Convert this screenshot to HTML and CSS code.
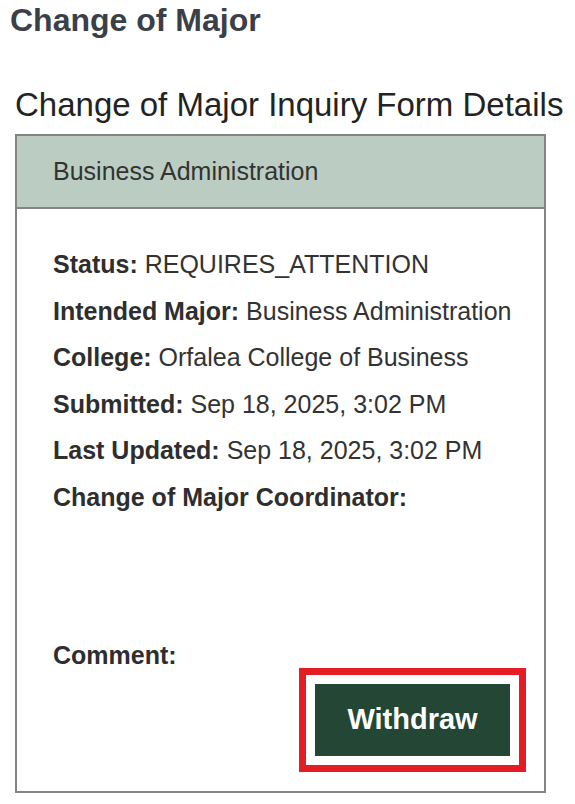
FILE: index.html
```html
<!DOCTYPE html>
<html lang="en">
<head>
<meta charset="utf-8">
<title>Change of Major</title>
<link rel="stylesheet" href="styles.css">
</head>
<body>
<main class="page">
  <h1 class="page-title">Change of Major</h1>
  <section class="details">
    <h2 class="details-title">Change of Major Inquiry Form Details</h2>
    <div class="card">
      <div class="card-header">Business Administration</div>
      <div class="card-body">
        <div class="row"><strong>Status:</strong> REQUIRES_ATTENTION</div>
        <div class="row"><strong>Intended Major:</strong> Business Administration</div>
        <div class="row"><strong>College:</strong> Orfalea College of Business</div>
        <div class="row"><strong>Submitted:</strong> Sep 18, 2025, 3:02 PM</div>
        <div class="row"><strong>Last Updated:</strong> Sep 18, 2025, 3:02 PM</div>
        <div class="row"><strong>Change of Major Coordinator:</strong></div>
        <div class="row row-comment"><strong>Comment:</strong></div>
        <div class="actions">
          <button class="btn-withdraw" type="button">Withdraw</button>
        </div>
      </div>
    </div>
  </section>
</main>
</body>
</html>
```
FILE: styles.css
```css
html, body {
  margin: 0;
  padding: 0;
  background: #ffffff;
}

body {
  font-family: "Liberation Sans", Arial, Helvetica, sans-serif;
}

.page {
  padding: 2px 0 0 10px;
}

.page-title {
  margin: 0;
  font-size: 32px;
  line-height: 37px;
  font-weight: 700;
  color: #3b4048;
}

.details {
  margin: 47px 0 0 5px;
  width: 531px;
}

.details-title {
  margin: 0 0 10px 0;
  font-size: 33px;
  line-height: 38px;
  font-weight: 400;
  color: #232323;
  white-space: nowrap;
}

.card {
  border: 2px solid #858585;
  box-sizing: border-box;
  width: 531px;
}

.card-header {
  background: #bbcdc2;
  border-bottom: 2px solid #858585;
  height: 71px;
  display: flex;
  align-items: center;
  padding: 0 36px;
  font-size: 25px;
  color: #333333;
}

.card-body {
  padding: 41px 34px 35px 36px;
  display: flex;
  flex-direction: column;
  gap: 17.5px;
  color: #333333;
  font-size: 25px;
}

.row {
  height: 29px;
  line-height: 29px;
  white-space: nowrap;
}

.row strong {
  font-weight: 700;
  color: #2e2e2e;
}

.row-comment {
  margin-top: 112px;
}

.actions {
  display: flex;
  justify-content: flex-end;
  margin-top: -4px;
}

.btn-withdraw {
  width: 195px;
  height: 72px;
  border: none;
  background: #244634;
  color: #ffffff;
  font-family: "Liberation Sans", Arial, Helvetica, sans-serif;
  font-size: 29px;
  font-weight: 700;
  outline: 7px solid #e41c23;
  outline-offset: 9px;
  padding: 0;
  cursor: pointer;
}
```
